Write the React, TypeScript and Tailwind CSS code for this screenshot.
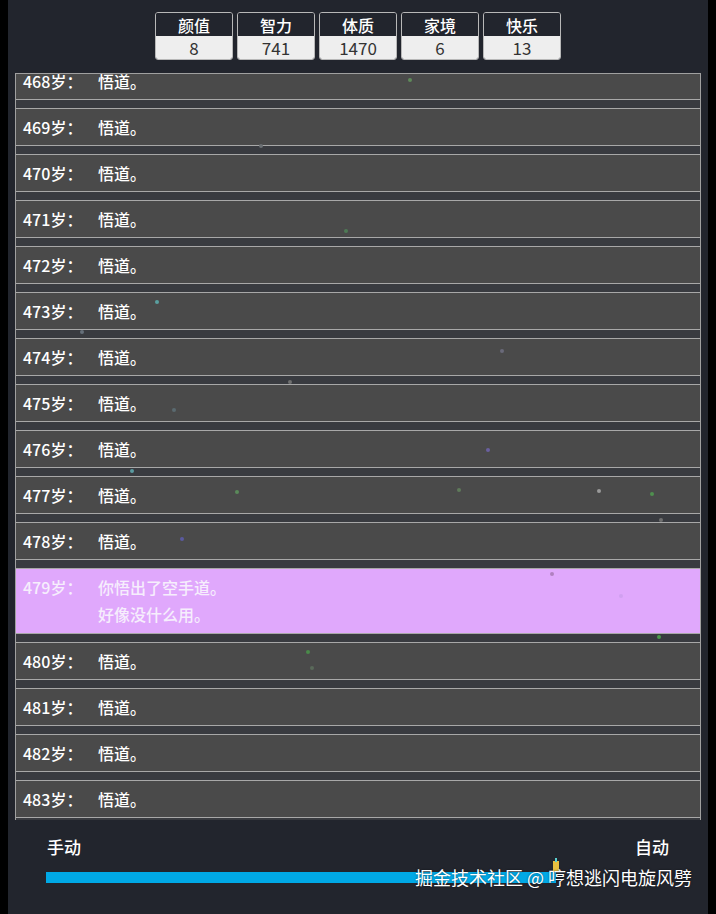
import React from "react";

const stats = [
  { label: "颜值", value: "8" },
  { label: "智力", value: "741" },
  { label: "体质", value: "1470" },
  { label: "家境", value: "6" },
  { label: "快乐", value: "13" },
];

const events: { age: number; lines: string[]; special?: boolean }[] = [
  { age: 468, lines: ["悟道。"] },
  { age: 469, lines: ["悟道。"] },
  { age: 470, lines: ["悟道。"] },
  { age: 471, lines: ["悟道。"] },
  { age: 472, lines: ["悟道。"] },
  { age: 473, lines: ["悟道。"] },
  { age: 474, lines: ["悟道。"] },
  { age: 475, lines: ["悟道。"] },
  { age: 476, lines: ["悟道。"] },
  { age: 477, lines: ["悟道。"] },
  { age: 478, lines: ["悟道。"] },
  { age: 479, lines: ["你悟出了空手道。", "好像没什么用。"], special: true },
  { age: 480, lines: ["悟道。"] },
  { age: 481, lines: ["悟道。"] },
  { age: 482, lines: ["悟道。"] },
  { age: 483, lines: ["悟道。"] },
];

// floating particles from the background animation
const dots = [
  { x: 408, y: 78, c: "bg-[#5f8a5a]" },
  { x: 259, y: 144, c: "bg-[#6b6f73]" },
  { x: 344, y: 229, c: "bg-[#4e7a55]" },
  { x: 155, y: 300, c: "bg-[#5aa0a0]" },
  { x: 80, y: 330, c: "bg-[#66707a]" },
  { x: 500, y: 349, c: "bg-[#6a6a7a]" },
  { x: 288, y: 380, c: "bg-[#707070]" },
  { x: 172, y: 408, c: "bg-[#5a6a70]" },
  { x: 486, y: 448, c: "bg-[#6a60a0]" },
  { x: 130, y: 469, c: "bg-[#5a9aa0]" },
  { x: 235, y: 490, c: "bg-[#5a8a5a]" },
  { x: 457, y: 488, c: "bg-[#5f7a5a]" },
  { x: 597, y: 489, c: "bg-[#9a9a9a]" },
  { x: 650, y: 492, c: "bg-[#4f8f4f]" },
  { x: 659, y: 518, c: "bg-[#707070]" },
  { x: 180, y: 537, c: "bg-[#5a5aa0]" },
  { x: 550, y: 572, c: "bg-[#b080c0]" },
  { x: 619, y: 594, c: "bg-[#d0a0f0]" },
  { x: 657, y: 635, c: "bg-[#4a9a4a]" },
  { x: 306, y: 650, c: "bg-[#4a8a4a]" },
  { x: 310, y: 666, c: "bg-[#5a6a5a]" },
];

export default function App() {
  return (
    <div
      className="relative w-[716px] h-[914px] bg-black flex overflow-hidden"
      style={{ fontFamily: '"Noto Sans CJK SC", "Noto Sans", sans-serif' }}
    >
      <div className="mx-[8px] flex-1 bg-[#22252d] flex flex-col">
        {/* stats */}
        <div className="flex justify-center gap-[4px] pt-[12px]">
          {stats.map((s) => (
            <div key={s.label} className="w-[78px] rounded-[3px] border border-[#b8b8b8] overflow-hidden">
              <div className="h-[23px] flex items-center justify-center text-white text-[16px] leading-none font-medium bg-[#22252d]">
                {s.label}
              </div>
              <div className="h-[23px] flex items-center justify-center bg-[#eeeeee] text-[#333] text-[17px] leading-none">
                {s.value}
              </div>
            </div>
          ))}
        </div>

        {/* life list */}
        <div className="mt-[13px] ml-[7px] mr-[7px] h-[747px] overflow-hidden border-x border-t border-[#a0a0a0] bg-[#393b40]">
          <div className="-mt-[12px] flex flex-col gap-[8px]">
            {events.map((e) => (
              <div
                key={e.age}
                className={`flex border-y border-[#a8a8a8] text-[16px] font-medium ${
                  e.special ? "bg-[#e0a8fc] text-[#f6eefc] py-[5px] leading-[27px]" : "bg-[#4a4a4a] text-white h-[38px] items-center"
                }`}
              >
                <div className="w-[82px] pl-[7px] shrink-0">{e.age}岁：</div>
                <div className="flex flex-col">
                  {e.lines.map((l) => (
                    <span key={l}>{l}</span>
                  ))}
                </div>
              </div>
            ))}
          </div>
        </div>

        {/* mode slider */}
        <div className="flex justify-between px-[39px] pt-[14px] text-white text-[17px] font-medium">
          <span>手动</span>
          <span>自动</span>
        </div>
        <div className="relative ml-[38px] mt-[12px] w-[510px] h-[11px] bg-[#00a9e6]">
          <div className="absolute right-[-3px] top-[-11px] w-[6px] h-[11px] bg-[#e8c040]" />
          <div className="absolute right-[-1px] top-[-14px] w-[2px] h-[4px] bg-[#5ad0d0]" />
        </div>
      </div>

      {dots.map((d, i) => (
        <div
          key={i}
          className={`absolute w-[4px] h-[4px] rounded-full ${d.c}`}
          style={{ left: d.x, top: d.y }}
        />
      ))}

      {/* watermark */}
      <div className="absolute left-[415px] top-[868px] text-white text-[18px] leading-none whitespace-nowrap [text-shadow:0_0_2px_rgba(0,0,0,0.6)]">
        掘金技术社区 @ 哼想逃闪电旋风劈
      </div>
    </div>
  );
}
